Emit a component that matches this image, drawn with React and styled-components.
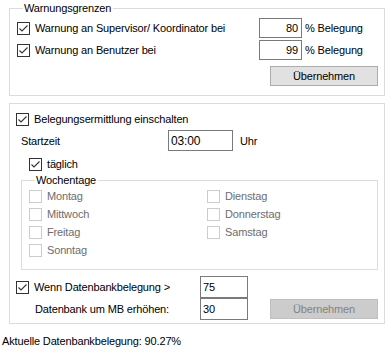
import React from 'react'
import styled, { createGlobalStyle } from 'styled-components'

const GlobalStyle = createGlobalStyle`
  html, body {
    margin: 0;
    padding: 0;
    background: #fff;
  }
  body {
    font-family: "Liberation Sans", Arial, sans-serif;
    font-size: 11px;
    letter-spacing: -0.15px;
    color: #000;
  }
`

const Page = styled.div`
  width: 391px;
  height: 361px;
  padding: 1px 0 0 9px;
  box-sizing: border-box;
  display: flex;
  flex-direction: column;
`

const Group = styled.fieldset`
  box-sizing: border-box;
  width: ${p => p.$width || 376}px;
  margin: ${p => p.$margin || 0};
  padding: ${p => p.$padding || 0};
  border: 1px solid #dcdcdc;
  min-width: 0;
`

const Legend = styled.legend`
  margin-left: ${p => p.$indent || 5}px;
  padding: 0 2px 0 1px;
  line-height: 14px;
  font-size: 11px;
`

const Panel = styled.div`
  box-sizing: border-box;
  width: 376px;
  margin-top: 7px;
  padding: 7px 0 3px 6px;
  border: 1px solid #dcdcdc;
  display: flex;
  flex-direction: column;
`

const LimitGrid = styled.div`
  display: grid;
  grid-template-columns: 239px 43px auto;
  grid-auto-rows: 20px;
  row-gap: 2px;
  column-gap: 3px;
  align-items: center;
`

const Check = styled.label`
  display: flex;
  align-items: center;
  gap: 5px;
  height: ${p => p.$h || 16}px;
  margin-left: ${p => p.$indent || 0}px;
  margin-top: ${p => p.$top || 0}px;
  color: ${p => (p.$disabled ? '#6d6d6d' : '#000')};
  white-space: nowrap;
`

const Box = styled.span`
  box-sizing: border-box;
  width: 13px;
  height: 13px;
  flex: none;
  border: 1px solid ${p => (p.$disabled ? '#cccccc' : '#333333')};
  background: #fff;
  display: flex;

  svg {
    display: block;
  }
`

const Field = styled.div`
  box-sizing: border-box;
  width: ${p => p.$w}px;
  height: ${p => p.$h || 20}px;
  border: 1px solid #7a7a7a;
  background: #fff;
  padding: 0 3px 0 2px;
  display: flex;
  align-items: center;
  justify-content: ${p => (p.$right ? 'flex-end' : 'flex-start')};
  font-size: ${p => p.$fs || 11}px;
`

const Unit = styled.span`
  white-space: nowrap;
`

const ButtonRow = styled.div`
  display: flex;
  justify-content: flex-end;
  padding: 6px 6px 9px 0;
`

const Button = styled.button`
  box-sizing: border-box;
  width: 108px;
  height: 20px;
  margin: 0;
  padding: 0;
  font-family: inherit;
  font-size: 11px;
  letter-spacing: inherit;
  border: 1px solid ${p => (p.disabled ? '#bfbfbf' : '#adadad')};
  background: ${p => (p.disabled ? '#cccccc' : '#e1e1e1')};
  color: ${p => (p.disabled ? '#838383' : '#000')};
`

const TimeRow = styled.div`
  display: flex;
  align-items: center;
  height: 21px;
  margin-top: 3px;
  padding-left: 5px;
`

const TimeLabel = styled.span`
  width: 147px;
`

const Suffix = styled.span`
  margin-left: 7px;
`

const DaysGroup = styled(Group)`
  margin: 1px 0 0 5px;
  padding: 0 0 10px 7px;
`

const DaysGrid = styled.div`
  display: grid;
  grid-template-columns: 178px auto;
  grid-auto-rows: 18px;
  align-items: center;
`

const GrowGrid = styled.div`
  display: grid;
  grid-template-columns: 184px 48px 108px;
  grid-template-rows: 22px 22px;
  align-items: center;
  margin-top: 6px;

  & > button {
    margin-left: 22px;
  }
`

const Indented = styled.span`
  padding-left: 19px;
`

const Status = styled.div`
  margin: 10px 0 0 -7px;
  line-height: 14px;
`

const CheckBox = ({ checked, disabled, children, indent, top, h }) => (
  <Check $disabled={disabled} $indent={indent} $top={top} $h={h}>
    <Box $disabled={disabled}>
      {checked && (
        <svg width="11" height="11" viewBox="0 0 11 11">
          <polyline points="1.5,5.5 4,8 9.5,2.5" fill="none" stroke="#333" strokeWidth="1.1" />
        </svg>
      )}
    </Box>
    <span>{children}</span>
  </Check>
)

const days = [
  ['Montag', 'Dienstag'],
  ['Mittwoch', 'Donnerstag'],
  ['Freitag', 'Samstag'],
  ['Sonntag', null],
]

export default function App() {
  return (
    <Page>
      <GlobalStyle />
      <Group $padding="3px 0 0 7px">
        <Legend $indent={6}>Warnungsgrenzen</Legend>
        <LimitGrid>
          <CheckBox checked>Warnung an Supervisor/ Koordinator bei</CheckBox>
          <Field $w={43} $right>80</Field>
          <Unit>% Belegung</Unit>
          <CheckBox checked>Warnung an Benutzer bei</CheckBox>
          <Field $w={43} $right>99</Field>
          <Unit>% Belegung</Unit>
        </LimitGrid>
        <ButtonRow>
          <Button type="button">Übernehmen</Button>
        </ButtonRow>
      </Group>

      <Panel>
        <CheckBox checked>Belegungsermittlung einschalten</CheckBox>
        <TimeRow>
          <TimeLabel>Startzeit</TimeLabel>
          <Field $w={65} $h={21} $fs={12}>03:00</Field>
          <Suffix>Uhr</Suffix>
        </TimeRow>
        <CheckBox checked indent={13} top={5}>täglich</CheckBox>
        <DaysGroup as="fieldset" $width={357}>
          <Legend $indent={6}>Wochentage</Legend>
          <DaysGrid>
            {days.flat().map((d, i) =>
              d ? (
                <CheckBox key={i} disabled h={18}>{d}</CheckBox>
              ) : (
                <span key={i} />
              )
            )}
          </DaysGrid>
        </DaysGroup>
        <GrowGrid>
          <CheckBox checked>Wenn Datenbankbelegung &gt;</CheckBox>
          <Field $w={48} $h={22}>75</Field>
          <span />
          <Indented>Datenbank um MB erhöhen:</Indented>
          <Field $w={48} $h={22}>30</Field>
          <Button type="button" disabled>Übernehmen</Button>
        </GrowGrid>
      </Panel>

      <Status>Aktuelle Datenbankbelegung: 90.27%</Status>
    </Page>
  )
}
